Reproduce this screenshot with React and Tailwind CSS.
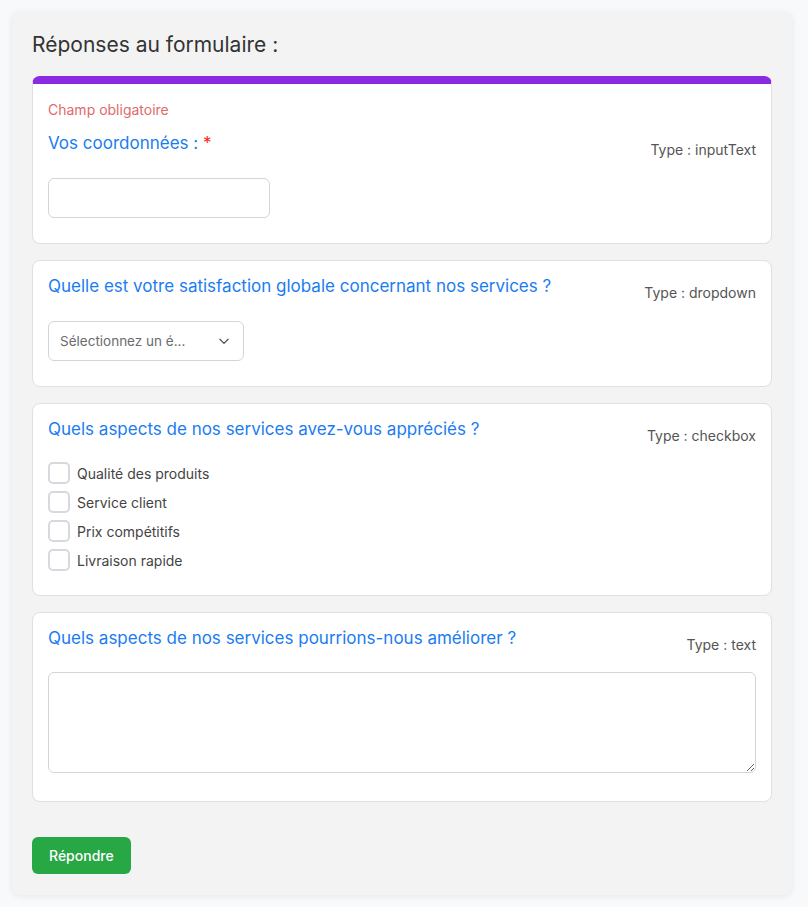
import React from 'react';

const questions = [
  { id: 'q1', label: 'Vos coordonnées :', type: 'inputText', required: true },
  { id: 'q2', label: 'Quelle est votre satisfaction globale concernant nos services ?', type: 'dropdown' },
  {
    id: 'q3',
    label: 'Quels aspects de nos services avez-vous appréciés ?',
    type: 'checkbox',
    options: ['Qualité des produits', 'Service client', 'Prix compétitifs', 'Livraison rapide'],
  },
  { id: 'q4', label: 'Quels aspects de nos services pourrions-nous améliorer ?', type: 'text' },
];

const Field = ({ q }) => {
  switch (q.type) {
    case 'inputText':
      return <input type="text" className="mt-[18px] h-10 w-[222px] rounded-md border border-[#d4d4dc] bg-white px-3" />;
    case 'dropdown':
      return (
        <div className="mt-[18px] flex h-10 w-[196px] items-center justify-between rounded-md border border-[#d4d4dc] bg-white pl-[11px] pr-[12px]">
          <span className="text-[13.5px] text-[#6b6b70]">Sélectionnez un é...</span>
          <svg width="14" height="14" viewBox="0 0 24 24" fill="none" stroke="#555" strokeWidth="2.2" strokeLinecap="round" strokeLinejoin="round">
            <path d="M5 9l7 7 7-7" />
          </svg>
        </div>
      );
    case 'checkbox':
      return (
        <div className="mb-[-1px] mt-4 flex flex-col gap-[7px]">
          {q.options.map((opt) => (
            <label key={opt} className="flex items-center gap-[7px]">
              <span className="h-[22px] w-[22px] rounded-[5px] border-2 border-[#d8d8de] bg-white" />
              <span className="text-[14px] text-[#444]">{opt}</span>
            </label>
          ))}
        </div>
      );
    default:
      return <textarea className="mb-[3px] mt-[17px] block h-[101px] w-full rounded-md border border-[#d4d4dc] bg-white p-2" />;
  }
};

export default function App() {
  return (
    <div className="min-h-screen bg-[#f8f9fa] py-3 pl-3 pr-4 font-['Inter',sans-serif]">
      <div className="rounded-lg bg-[#f3f3f3] px-5 pb-[21px] pt-[21px] shadow-[0_1px_6px_rgba(0,0,0,0.08)]">
        <h2 className="text-[21px] leading-6 text-[#333]">Réponses au formulaire :</h2>

        <div className="mt-[19px] flex flex-col gap-4">
          {questions.map((q) => (
            <div
              key={q.id}
              className={
                q.required
                  ? 'rounded-lg border border-[#e0e0e0] border-t-8 border-t-[#8a2be2] bg-white px-[15px] pb-[25px] pt-4'
                  : 'rounded-lg border border-[#e0e0e0] bg-white px-[15px] pb-[25px] pt-[13px]'
              }
            >
              {q.required && <p className="mb-[11px] text-[14px] leading-5 text-[#e06a6a]">Champ obligatoire</p>}
              <div className="flex items-start justify-between">
                <h3 className="text-[17px] leading-6 text-[#1a7cf2]">
                  {q.label}
                  {q.required && <span className="text-[#ff2020]"> *</span>}
                </h3>
                <span className="pt-[9px] text-[14px] leading-5 text-[#555]">Type : {q.type}</span>
              </div>
              <Field q={q} />
            </div>
          ))}
        </div>

        <button className="mt-[35px] h-[37px] rounded-md bg-[#28a745] px-[17px] text-[14px] font-medium text-white">Répondre</button>
      </div>
    </div>
  );
}
